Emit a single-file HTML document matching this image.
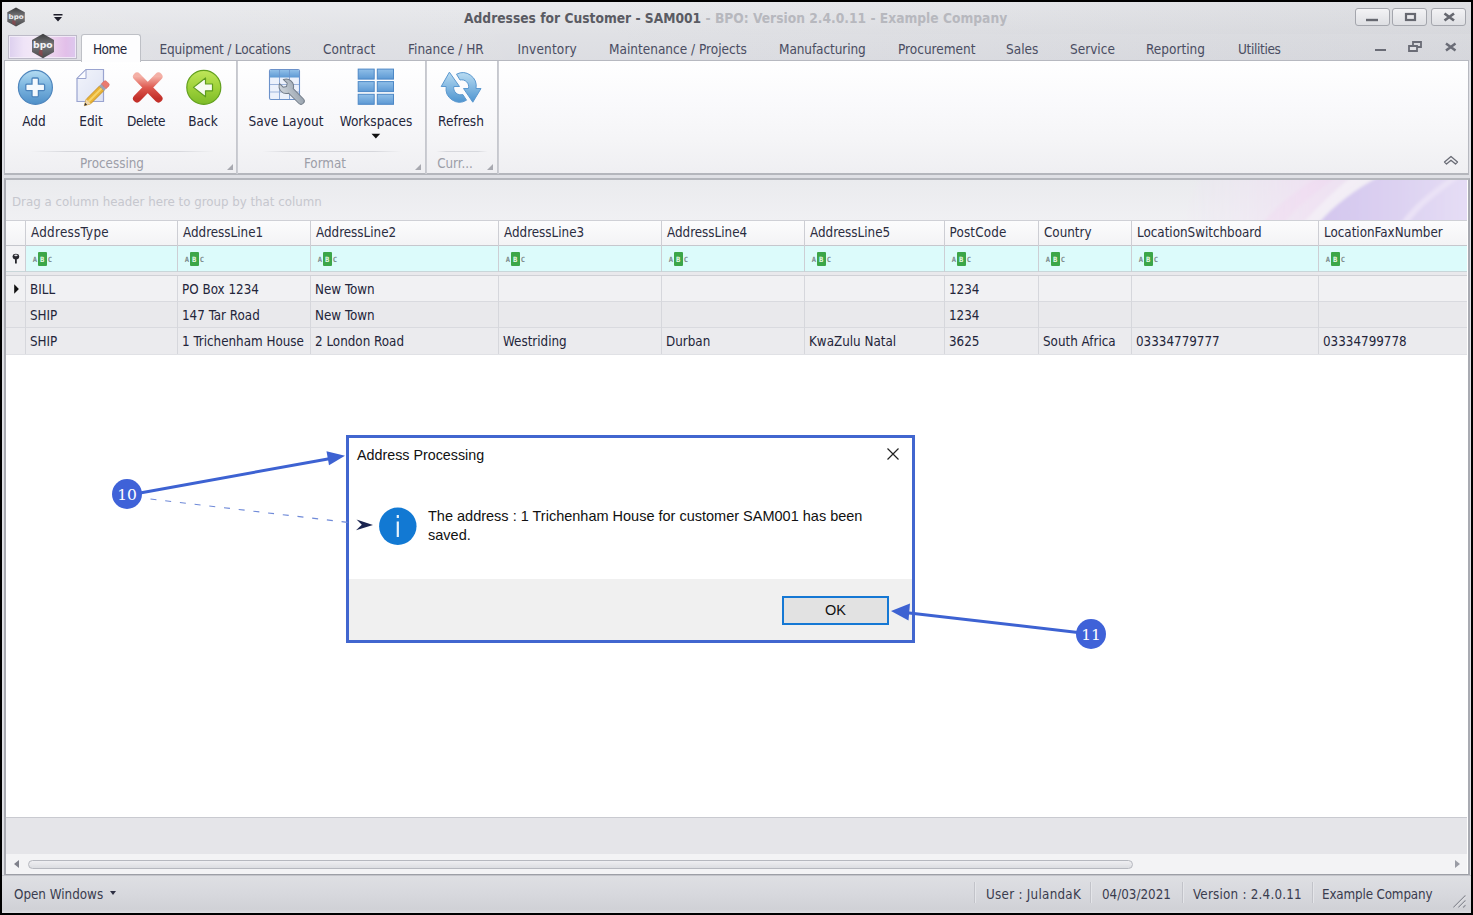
<!DOCTYPE html>
<html><head><meta charset="utf-8"><title>Addresses for Customer - SAM001</title>
<style>
*{box-sizing:border-box;margin:0;padding:0}
html,body{width:1473px;height:915px;overflow:hidden;background:#000}
body{font-family:"DejaVu Sans Condensed","Liberation Sans",sans-serif;font-size:13.3px;color:#23253a;position:relative}
div,span{position:absolute;white-space:nowrap}
#frame{left:0;top:0;width:1473px;height:915px;border:2px solid #000;z-index:99}
#win{left:2px;top:2px;width:1469px;height:911px;background:#dfe0e5}
/* ---------- title bar ---------- */
#titlebar{left:2px;top:2px;width:1469px;height:32px;background:linear-gradient(90deg,rgba(255,255,255,.12),rgba(255,255,255,0) 40%,rgba(90,92,105,.07)),linear-gradient(#e8e9ec,#e0e1e5)}
#title{left:464px;top:9.500px;font-weight:bold;font-size:13.7px;color:#5a5b63;letter-spacing:0px}
#title span{position:static;color:#b7b8be}
.wbtn{top:8px;height:18px;width:35px;border:1px solid #a4a6ad;border-radius:3px;background:linear-gradient(#f3f3f5,#dedfe3)}
/* ---------- tab row ---------- */
#tabrow{left:2px;top:34px;width:1469px;height:27px;background:linear-gradient(90deg,rgba(255,255,255,.1),rgba(255,255,255,0) 40%,rgba(90,92,105,.05)),linear-gradient(#e0e1e5,#dcdde2)}
.tab{top:40.800px;font-size:13.5px;color:#4a4d62}
#appbtn{left:8px;top:34.500px;width:69px;height:24px;border:1px solid #bdbac8;box-shadow:inset 0 0 0 1px rgba(245,240,250,.8);background:linear-gradient(90deg,#dccfee,#efe4f7 22%,#f4e9f7 40%,#e9cdec 70%,#e2bfe9 85%,#dcc8ee)}
#hometab{left:81px;top:34px;width:60px;height:28px;border:1px solid #bec0c6;border-bottom:none;border-radius:3px 3px 0 0;background:#fdfdfe}
/* ---------- ribbon ---------- */
#ribbon{left:4px;top:60px;width:1465px;height:115px;background:linear-gradient(#ffffff,#fafafc 35%,#f5f5f7 70%,#efeff2);border:1px solid #b7b9c0;border-bottom:2px solid #b4b6bc}
.rl{top:113px;font-size:13.5px;color:#23253a;transform:translateX(-50%)}
.gcap{top:156px;font-size:13.3px;color:#9c9ea8;transform:translateX(-50%)}
.gsep{top:61px;width:2px;height:113px;background:linear-gradient(90deg,#c3c5cb,#cfd0d6)}
.gline{top:151px;height:1px;background:linear-gradient(90deg,rgba(200,201,208,0),#d6d7dc 20%,#d6d7dc 80%,rgba(200,201,208,0))}
.launch{top:164px;width:0;height:0;border-left:6px solid transparent;border-bottom:6px solid #a8a9b0}

/* ---------- grid ---------- */
#gridwrap{left:4px;top:178px;width:1466px;height:697px;border:2px solid #a9abb2;border-top:2px solid #b4b6bc;border-bottom:1px solid #9d9fa6;background:#fff}
#grouppanel{left:6px;top:180px;width:1461px;height:40px;background:linear-gradient(#eaebee,#f0f0f3)}
#grouptext{left:12px;top:193.500px;font-size:13.15px;color:#c6c7ce}
#hdr{left:6px;top:220px;width:1461px;height:26px;background:linear-gradient(#fcfcfd,#f3f3f5);border-top:1px solid #cfd0d6;border-bottom:1px solid #c6c7cd}
#flt{left:6px;top:246px;width:1461px;height:26px;background:#dcfbfb;border-bottom:1px solid #c9d6d9}
#fltind{left:6px;top:246px;width:19px;height:25px;background:#f3f3f5}
#fsep{left:6px;top:272px;width:1461px;height:4px;background:#e9e9ec;border-bottom:1px solid #d0d1d6}
.row{left:6px;width:1461px;height:26px;border-bottom:1px solid #d9dadf}
.vl{width:1px;background:#cdced4}
.h{top:225.200px;font-size:13.3px;color:#2a2c40}
.c{font-size:13.3px;color:#23253a}

/* ---------- bottom ---------- */
#gfoot{left:6px;top:817px;width:1461px;height:37px;background:#e5e5e9;border-top:1px solid #c9cad0}
#hscroll{left:6px;top:854px;width:1461px;height:20px;background:#f3f3f5}
#thumb{left:28px;top:859.500px;width:1105px;height:9.500px;border:1px solid #b6b8bf;border-radius:5px;background:linear-gradient(#efeff2,#dcdde1)}
.sarr{top:859px;width:0;height:0;border-top:4px solid transparent;border-bottom:4px solid transparent}
#status{left:2px;top:875px;width:1469px;height:38px;background:linear-gradient(#dedfe3,#d8d9de 45%,#d0d1d6 90%,#dcdde1);border-top:1px solid #c3c4ca}
.st{top:886.500px;font-size:13.3px;color:#3a3c4e}
.ssep{top:882px;width:2px;height:21px;border-left:1px solid #c2c3c9;border-right:1px solid #e4e5e9}
/* ---------- dialog ---------- */
#dlg{left:346px;top:434.500px;width:568.500px;height:208px;border:3px solid #4166cf;background:#fff}
#dlgfoot{left:349px;top:579px;width:563px;height:61px;background:#f0f0f0}
#dlgtitle{left:357px;top:447px;font-family:"Liberation Sans",sans-serif;font-size:14.3px;color:#111}
#dlgmsg{left:428px;top:507px;font-family:"Liberation Sans",sans-serif;font-size:14.5px;line-height:19px;color:#111;white-space:normal;width:470px}
#okbtn{left:782px;top:596px;width:107px;height:29px;border:2px solid #1578d4;background:#e2e2e2;font-family:"Liberation Sans",sans-serif;font-size:14.5px;color:#111;text-align:center;line-height:25px}
#annot{left:0;top:0;width:1473px;height:915px;z-index:50}

.abc{top:252px;width:22px;height:14px;font-family:"DejaVu Sans Mono","Liberation Mono",monospace;font-size:7.2px;font-weight:bold;line-height:15.500px}
.abc span{top:0;height:14px;text-align:center}
.abc .a{left:0;width:5px;color:#7c8b8b}
.abc .b{left:5.500px;width:8.500px;background:#3ca648;color:#e9f8ea;border-radius:1px}
.abc .cc{left:15px;width:5px;color:#7c8b8b}
</style></head><body>
<div id="win"></div>
<div id="titlebar"></div>
<div id="title">Addresses for Customer - SAM001 <span>- BPO: Version 2.4.0.11 - Example Company</span></div>
<div class="wbtn" style="left:1355px"></div>
<div class="wbtn" style="left:1392px"></div>
<div class="wbtn" style="left:1431px"></div>
<div id="tabrow"></div>
<div id="appbtn"></div>
<div id="ribbon"></div>
<div id="hometab"></div>
<div class="tab" style="left:93px;color:#23253a;letter-spacing:-.55px">Home</div>
<div class="tab" style="left:159.500px;letter-spacing:-.2px">Equipment / Locations</div>
<div class="tab" style="left:323px">Contract</div>
<div class="tab" style="left:408px">Finance / HR</div>
<div class="tab" style="left:517.500px;letter-spacing:.15px">Inventory</div>
<div class="tab" style="left:609px">Maintenance / Projects</div>
<div class="tab" style="left:779px;letter-spacing:-.1px">Manufacturing</div>
<div class="tab" style="left:898px">Procurement</div>
<div class="tab" style="left:1006px">Sales</div>
<div class="tab" style="left:1070px">Service</div>
<div class="tab" style="left:1146px">Reporting</div>
<div class="tab" style="left:1238px;letter-spacing:-.35px">Utilities</div>
<svg id="icons" style="position:absolute;left:0;top:0;z-index:5" width="1473" height="180" viewBox="0 0 1473 180">
<defs>
 <linearGradient id="gAdd" x1="0" y1="0" x2="0" y2="1"><stop offset="0" stop-color="#b4dcf2"/><stop offset=".45" stop-color="#7db6e0"/><stop offset="1" stop-color="#4f8fc8"/></linearGradient>
 <linearGradient id="gBack" x1="0" y1="0" x2="0" y2="1"><stop offset="0" stop-color="#bfe65a"/><stop offset=".5" stop-color="#9fd23a"/><stop offset="1" stop-color="#7dbb28"/></linearGradient>
 <linearGradient id="gDel" x1="0" y1="0" x2="0" y2="1"><stop offset="0" stop-color="#f4b0a6"/><stop offset=".5" stop-color="#de5a50"/><stop offset="1" stop-color="#c3302a"/></linearGradient>
 <linearGradient id="gBlue" x1="0" y1="0" x2="0" y2="1"><stop offset="0" stop-color="#90bfe8"/><stop offset="1" stop-color="#5d99d4"/></linearGradient>
 <linearGradient id="gRef" x1="0" y1="0" x2="0" y2="1"><stop offset="0" stop-color="#b9dcf2"/><stop offset="1" stop-color="#4f95d0"/></linearGradient>
 <linearGradient id="gPage" x1="0" y1="0" x2="1" y2="1"><stop offset="0" stop-color="#f2f4fb"/><stop offset="1" stop-color="#dde2f3"/></linearGradient>
 <linearGradient id="gWr" x1="0" y1="0" x2="1" y2="1"><stop offset="0" stop-color="#d4dae0"/><stop offset="1" stop-color="#8d98a4"/></linearGradient>
 <linearGradient id="gHex" x1="0" y1="0" x2="0" y2="1"><stop offset="0" stop-color="#3c3c3e"/><stop offset=".45" stop-color="#77777a"/><stop offset="1" stop-color="#4a4a4c"/></linearGradient>
</defs>
<!-- Add -->
<circle cx="35.400" cy="87.400" r="17" fill="url(#gAdd)" stroke="#4f86bd" stroke-width="1.200"/>
<path d="M33 78h4.400a1 1 0 0 1 1 1v5.200h5.200a1 1 0 0 1 1 1v4.400a1 1 0 0 1-1 1h-5.200v5.200a1 1 0 0 1-1 1h-4.400a1 1 0 0 1-1-1v-5.200h-5.200a1 1 0 0 1-1-1v-4.400a1 1 0 0 1 1-1h5.200v-5.200a1 1 0 0 1 1-1z" fill="#f4f9fd" stroke="#4c84bc" stroke-width="1.300"/>
<!-- Edit -->
<path d="M86 69.500H103.500V101.500H77V78.500z" fill="url(#gPage)" stroke="#9aa4d0" stroke-width="1.200"/>
<path d="M86 69.500V78.500H77z" fill="#fbfcff" stroke="#9aa4d0" stroke-width="1"/>
<g transform="translate(84.300,105.700) rotate(-45)">
 <path d="M0 0L6 -3.200H24.500V3.200H6z" fill="#e9b234" stroke="#b9851f" stroke-width=".7"/>
 <path d="M6 -1H24.500V1H6z" fill="#f6d46a"/>
 <path d="M0 0L6 -3.200V3.200z" fill="#f1d7a8"/>
 <path d="M0 0L2.600 -1.400V1.400z" fill="#2b2b33"/>
 <rect x="24.500" y="-3.400" width="3" height="6.800" fill="#9aa2b4"/>
 <path d="M27.500 -3.400h3.500a2 2 0 0 1 2 2v2.800a2 2 0 0 1-2 2h-3.500z" fill="#ea7a70" stroke="#d2584e" stroke-width=".5"/>
</g>
<!-- Delete -->
<path d="M137 76.500L158.500 98.500M158.500 76.500L137 98.500" stroke="url(#gDel)" stroke-width="8" stroke-linecap="round" fill="none"/>
<!-- Back -->
<circle cx="203.800" cy="87.400" r="17" fill="url(#gBack)" stroke="#62a01e" stroke-width="1.200"/>
<path d="M193.500 87.400L205.500 78V84H212.500V90.800H205.500V96.800z" fill="#f6fbf0" stroke="#5f9c20" stroke-width="1.200" stroke-linejoin="round"/>
<!-- Save layout -->
<rect x="269.500" y="69.500" width="30" height="30" rx="1.500" fill="#ecf1fb" stroke="#6c92ca" stroke-width="1.100"/>
<path d="M270 71a1 1 0 0 1 1-1h27a1 1 0 0 1 1 1v6.500H270z" fill="url(#gBlue)"/>
<path d="M279.500 70V99.500M289.500 70V99.500" stroke="#6c92ca" stroke-width="1" opacity=".75"/>
<path d="M270 84.500H299M270 92H299" stroke="#8aa6d4" stroke-width="1" opacity=".8"/>
<g transform="translate(286.500,86.500) rotate(-45)">
 <path d="M-3 -7.200A7.300 7.300 0 1 0 3 -7.200V-1.500L0 .8L-3 -1.500z" fill="none"/>
 <path d="M-2.800 -7A7.400 7.400 0 0 0 -3.200 6.300V20.500A3.200 3.200 0 0 0 3.200 20.500V6.300A7.400 7.400 0 0 0 2.800 -7V-1.800L0 0L-2.800 -1.800z" fill="url(#gWr)" stroke="#727c88" stroke-width="1"/>
</g>
<!-- Workspaces -->
<g fill="url(#gBlue)" stroke="#4d88c6" stroke-width="1">
 <rect x="358.200" y="69.100" width="16" height="10"/><rect x="377.300" y="69.100" width="16.200" height="10"/>
 <rect x="358.200" y="81.600" width="16" height="10"/><rect x="377.300" y="81.600" width="16.200" height="10"/>
 <rect x="358.200" y="94.300" width="16" height="10"/><rect x="377.300" y="94.300" width="16.200" height="10"/>
</g>
<path d="M371.500 133.800H380.200L375.850 138.500z" fill="#111"/>
<!-- Refresh -->
<g fill="url(#gRef)" stroke="#5b98cf" stroke-width="1" stroke-linejoin="round">
 <path d="M449.400 72.200L441.200 86.500H446.200A13.500 13.500 0 0 0 466.500 100.200L462.800 94.500A7 7 0 0 1 453.800 86.500H459.500z"/>
 <path d="M472.800 102.200L481 88.500H476A13.500 13.500 0 0 0 456.500 74.200L460 80A7 7 0 0 1 468.500 88.500H463.500z"/>
</g>
<!-- title logo -->
<path d="M16 7.500L24.800 12.300V21.800L16 26.600L7.300 21.800V12.300z" fill="url(#gHex)"/>
<text x="16.100" y="19.300" font-family="'DejaVu Sans','Liberation Sans',sans-serif" font-weight="bold" font-size="6.500" fill="#f0f0f2" text-anchor="middle" textLength="15" lengthAdjust="spacingAndGlyphs">bpo</text>
<path d="M12.500 20L15.500 21V25.500L12 23.500z" fill="#a04048" opacity=".55"/>
<path d="M53.500 14H62.500V15.500H53.500zM54 17H62L58 21.500z" fill="#1c1c28"/>
<!-- app button logo -->
<path d="M43 33.800L54 40V52L43 58.200L32 52V40z" fill="url(#gHex)"/>
<text x="42.800" y="48.400" font-family="'DejaVu Sans','Liberation Sans',sans-serif" font-weight="bold" font-size="8.500" fill="#f4f4f6" text-anchor="middle" textLength="19.500" lengthAdjust="spacingAndGlyphs">bpo</text>
<path d="M39.500 49.500L42.500 50.500V56.500L38.500 54z" fill="#a83c44" opacity=".55"/>
<!-- window buttons glyphs -->
<path d="M1366 20H1378" stroke="#666870" stroke-width="2.400"/>
<rect x="1406" y="14" width="9" height="6" fill="none" stroke="#666870" stroke-width="2.200"/>
<path d="M1444.500 13.500L1454 20.500M1454 13.500L1444.500 20.500" stroke="#666870" stroke-width="2.700"/>
<!-- MDI child buttons -->
<path d="M1375 50H1386" stroke="#6a6c76" stroke-width="2"/>
<path d="M1413 42H1421V47H1413z" fill="none" stroke="#6a6c76" stroke-width="1.800"/>
<path d="M1409 46H1417V51H1409z" fill="#e0e1e5" stroke="#6a6c76" stroke-width="1.800"/>
<path d="M1446 43.500L1455.500 50.500M1455.500 43.500L1446 50.500" stroke="#6a6c76" stroke-width="2.500"/>
<!-- collapse chevrons -->
<path d="M1444.500 162L1451 156.500L1457.500 162L1455.500 164L1451 160.200L1446.500 164z" fill="none" stroke="#6a6c76" stroke-width="1.300" stroke-linejoin="round"/>
</svg>
<!-- ribbon labels -->
<div class="rl" style="left:34px">Add</div>
<div class="rl" style="left:91px">Edit</div>
<div class="rl" style="left:146px;letter-spacing:-.3px">Delete</div>
<div class="rl" style="left:203px">Back</div>
<div class="rl" style="left:286px">Save Layout</div>
<div class="rl" style="left:376px">Workspaces</div>
<div class="rl" style="left:461px">Refresh</div>
<div class="gcap" style="left:112px">Processing</div>
<div class="gcap" style="left:325px">Format</div>
<div class="gcap" style="left:455px">Curr...</div>
<div class="gline" style="left:30px;width:185px"></div>
<div class="gline" style="left:262px;width:140px"></div>
<div class="gline" style="left:436px;width:52px"></div>
<div class="gsep" style="left:236px"></div>
<div class="gsep" style="left:425px"></div>
<div class="gsep" style="left:497px"></div>
<div class="launch" style="left:227px"></div>
<div class="launch" style="left:415px"></div>
<div class="launch" style="left:487px"></div>
<div id="gridwrap"></div>
<div id="grouppanel"></div>
<div id="grouptext">Drag a column header here to group by that column</div>
<div id="hdr"></div>
<div id="flt"></div>
<div id="fltind"></div>
<div id="fsep"></div>
<div class="row" style="top:276px;background:#f1f1f3"></div>
<div class="row" style="top:302px;background:#e9e9ec"></div>
<div class="row" style="top:328px;height:26.500px;background:#ebebee;border-bottom-color:#e0e1e5"></div>
<div class="vl" style="left:25px;top:221px;height:51px"></div><div class="vl" style="left:25px;top:276px;height:78px;background:#d6d7dc"></div>
<div class="vl" style="left:177px;top:221px;height:51px"></div><div class="vl" style="left:177px;top:276px;height:78px;background:#d6d7dc"></div>
<div class="vl" style="left:310px;top:221px;height:51px"></div><div class="vl" style="left:310px;top:276px;height:78px;background:#d6d7dc"></div>
<div class="vl" style="left:498px;top:221px;height:51px"></div><div class="vl" style="left:498px;top:276px;height:78px;background:#d6d7dc"></div>
<div class="vl" style="left:661px;top:221px;height:51px"></div><div class="vl" style="left:661px;top:276px;height:78px;background:#d6d7dc"></div>
<div class="vl" style="left:804px;top:221px;height:51px"></div><div class="vl" style="left:804px;top:276px;height:78px;background:#d6d7dc"></div>
<div class="vl" style="left:944px;top:221px;height:51px"></div><div class="vl" style="left:944px;top:276px;height:78px;background:#d6d7dc"></div>
<div class="vl" style="left:1038px;top:221px;height:51px"></div><div class="vl" style="left:1038px;top:276px;height:78px;background:#d6d7dc"></div>
<div class="vl" style="left:1131px;top:221px;height:51px"></div><div class="vl" style="left:1131px;top:276px;height:78px;background:#d6d7dc"></div>
<div class="vl" style="left:1318px;top:221px;height:51px"></div><div class="vl" style="left:1318px;top:276px;height:78px;background:#d6d7dc"></div>
<div class="h" style="left:31px;letter-spacing:.28px">AddressType</div>
<div class="h" style="left:183px">AddressLine1</div>
<div class="h" style="left:316px">AddressLine2</div>
<div class="h" style="left:504px">AddressLine3</div>
<div class="h" style="left:667px">AddressLine4</div>
<div class="h" style="left:810px">AddressLine5</div>
<div class="h" style="left:949.500px;letter-spacing:.18px">PostCode</div>
<div class="h" style="left:1044px">Country</div>
<div class="h" style="left:1137px">LocationSwitchboard</div>
<div class="h" style="left:1324px">LocationFaxNumber</div>
<div class="c" style="left:30px;top:281.7px">BILL</div>
<div class="c" style="left:182px;top:281.7px">PO Box 1234</div>
<div class="c" style="left:315px;top:281.7px">New Town</div>
<div class="c" style="left:949px;top:281.7px">1234</div>
<div class="c" style="left:30px;top:307.7px">SHIP</div>
<div class="c" style="left:182px;top:307.7px">147 Tar Road</div>
<div class="c" style="left:315px;top:307.7px">New Town</div>
<div class="c" style="left:949px;top:307.7px">1234</div>
<div class="c" style="left:30px;top:333.7px">SHIP</div>
<div class="c" style="left:182px;top:333.7px">1 Trichenham House</div>
<div class="c" style="left:315px;top:333.7px">2 London Road</div>
<div class="c" style="left:503px;top:333.7px">Westriding</div>
<div class="c" style="left:666px;top:333.7px">Durban</div>
<div class="c" style="left:809px;top:333.7px">KwaZulu Natal</div>
<div class="c" style="left:949px;top:333.7px">3625</div>
<div class="c" style="left:1043px;top:333.7px">South Africa</div>
<div class="c" style="left:1136px;top:333.7px">03334779777</div>
<div class="c" style="left:1323px;top:333.7px">03334799778</div>
<div class="abc" style="left:32.5px"><span class="a">A</span><span class="b">B</span><span class="cc">C</span></div>
<div class="abc" style="left:184.5px"><span class="a">A</span><span class="b">B</span><span class="cc">C</span></div>
<div class="abc" style="left:317.5px"><span class="a">A</span><span class="b">B</span><span class="cc">C</span></div>
<div class="abc" style="left:505.5px"><span class="a">A</span><span class="b">B</span><span class="cc">C</span></div>
<div class="abc" style="left:668.5px"><span class="a">A</span><span class="b">B</span><span class="cc">C</span></div>
<div class="abc" style="left:811.5px"><span class="a">A</span><span class="b">B</span><span class="cc">C</span></div>
<div class="abc" style="left:951.5px"><span class="a">A</span><span class="b">B</span><span class="cc">C</span></div>
<div class="abc" style="left:1045.5px"><span class="a">A</span><span class="b">B</span><span class="cc">C</span></div>
<div class="abc" style="left:1138.5px"><span class="a">A</span><span class="b">B</span><span class="cc">C</span></div>
<div class="abc" style="left:1325.5px"><span class="a">A</span><span class="b">B</span><span class="cc">C</span></div>
<svg style="position:absolute;left:1180px;top:180px" width="287" height="40" viewBox="1180 180 287 40">
<defs>
 <linearGradient id="sw1" x1="0" y1="0" x2="1" y2="0"><stop offset="0" stop-color="#ecdff2" stop-opacity="0"/><stop offset=".25" stop-color="#eee4f3" stop-opacity=".35"/><stop offset=".7" stop-color="#f0e0f3" stop-opacity=".8"/><stop offset="1" stop-color="#ecdff2" stop-opacity=".8"/></linearGradient>
 <linearGradient id="sw2" x1="0" y1="0" x2="1" y2="0"><stop offset="0" stop-color="#d3c6ee"/><stop offset=".45" stop-color="#dbd0f1"/><stop offset="1" stop-color="#e6def5"/></linearGradient>
 <filter id="bl" x="-10%" y="-30%" width="120%" height="160%"><feGaussianBlur stdDeviation="1.600"/></filter>
</defs>
<g filter="url(#bl)">
 <path d="M1200 176H1368C1345 192 1325 208 1312 224H1180z" fill="url(#sw1)"/>
 <path d="M1352 176H1380C1355 190 1335 206 1322 224H1302C1318 206 1335 190 1352 176z" fill="#f3eef6" opacity=".9"/>
 <path d="M1380 176H1475V224H1318C1335 204 1355 190 1380 176z" fill="url(#sw2)"/>
 <path d="M1452 176H1462C1440 192 1420 206 1408 224H1400C1412 206 1430 192 1452 176z" fill="#ebe3f6" opacity=".9"/>
 <path d="M1320 176H1340C1318 190 1296 206 1284 224H1262C1276 206 1296 190 1320 176z" fill="#f0d8f0" opacity=".35"/>
</g>
</svg>
<svg style="position:absolute;left:6px;top:246px;z-index:3" width="19" height="56" viewBox="6 246 19 56">
 <ellipse cx="15.900" cy="256.600" rx="3.300" ry="2.900" fill="#26262c"/>
 <ellipse cx="15.900" cy="255.400" rx="1.700" ry=".8" fill="#d9d9de"/>
 <path d="M15 258.500H16.800V263.500H15z" fill="#26262c"/>
 <path d="M14.200 284.200L18.900 289L14.200 293.800z" fill="#111"/>
</svg>
<div id="gfoot"></div>
<div id="hscroll"></div>
<div id="thumb"></div>
<div class="sarr" style="left:14px;top:860px;border-right:5px solid #7f818b"></div>
<div class="sarr" style="left:1455px;top:860px;border-left:5px solid #9a9ca5"></div>
<div id="status"></div>
<div class="st" style="left:14px">Open Windows</div>
<div class="sarr" style="left:110px;top:891px;border:3.700px solid transparent;border-top:4.600px solid #2d2f42;border-bottom:none"></div>
<div class="ssep" style="left:974px"></div>
<div class="st" style="left:986px;letter-spacing:.27px">User : JulandaK</div>
<div class="ssep" style="left:1090px"></div>
<div class="st" style="left:1102px">04/03/2021</div>
<div class="ssep" style="left:1182px"></div>
<div class="st" style="left:1193px;letter-spacing:.22px">Version : 2.4.0.11</div>
<div class="ssep" style="left:1312px"></div>
<div class="st" style="left:1322px;letter-spacing:-.15px">Example Company</div>
<svg style="position:absolute;left:1450px;top:892px" width="20" height="20" viewBox="0 0 20 20">
 <path d="M3.500 15.500L15.500 3.500M8.500 15.500L15.500 8.500M13.200 15.500L15.500 13.200" stroke="#8d8f98" stroke-width="1.100"/>
 <path d="M4.500 15.800L15.800 4.500M9.500 15.800L15.800 9.500" stroke="#f2f2f4" stroke-width=".8"/>
</svg>
<!-- dialog -->
<div id="dlg"></div>
<div id="dlgfoot"></div>
<div id="dlgtitle">Address Processing</div>
<div id="dlgmsg">The address : 1 Trichenham House for customer SAM001 has been saved.</div>
<div id="okbtn">OK</div>
<svg id="annot" style="position:absolute;left:0;top:0;z-index:50" width="1473" height="915" viewBox="0 0 1473 915">
 <!-- dialog close X -->
 <path d="M887.5 448.500 L898.5 459.500 M898.5 448.500 L887.500 459.500" stroke="#222" stroke-width="1.2" fill="none"/>
 <!-- info icon -->
 <circle cx="397.800" cy="526.200" r="18.700" fill="#1279d3"/>
 <rect x="396.700" y="521.500" width="2.200" height="15.500" fill="#e8f3fc"/>
 <rect x="396.700" y="515" width="2.200" height="3" fill="#e8f3fc"/>
 <!-- annotation 10 -->
 <line x1="140" y1="493" x2="332" y2="458.200" stroke="#3d62d2" stroke-width="3"/>
 <polygon points="345,455.700 326.500,451.300 329,465.200" fill="#3d62d2"/>
 <line x1="150.500" y1="499" x2="348" y2="522.400" stroke="#6f8ad8" stroke-width="1.100" stroke-dasharray="6 8.800"/>
 <polygon points="373,525 356.500,519.500 361.800,524.800 356,530.200" fill="#1a2450"/>
 <circle cx="127" cy="494" r="15" fill="#3f62d8"/>
 <text x="127" y="499.500" font-family="'DejaVu Serif','Liberation Serif',serif" font-size="15.5" fill="#fff" text-anchor="middle">10</text>
 <!-- annotation 11 -->
 <line x1="1078" y1="632.500" x2="905" y2="612.500" stroke="#3d62d2" stroke-width="3"/>
 <polygon points="891,611 910,603.500 908.500,620.500" fill="#3d62d2"/>
 <circle cx="1091" cy="634" r="15" fill="#3f62d8"/>
 <text x="1091" y="639.500" font-family="'DejaVu Serif','Liberation Serif',serif" font-size="15.5" fill="#fff" text-anchor="middle">11</text>
</svg>
<div id="frame"></div>
</body></html>
